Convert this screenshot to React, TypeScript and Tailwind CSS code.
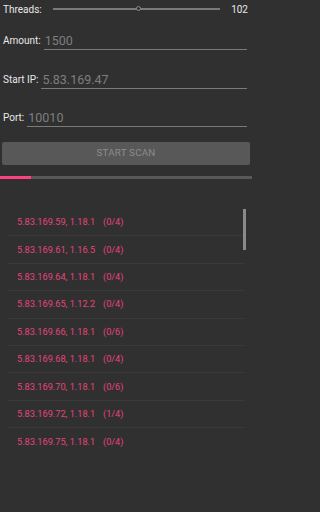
import React from "react";

const rows = [
  ["5.83.169.59, 1.18.1", "(0/4)"],
  ["5.83.169.61, 1.16.5", "(0/4)"],
  ["5.83.169.64, 1.18.1", "(0/4)"],
  ["5.83.169.65, 1.12.2", "(0/4)"],
  ["5.83.169.66, 1.18.1", "(0/6)"],
  ["5.83.169.68, 1.18.1", "(0/4)"],
  ["5.83.169.70, 1.18.1", "(0/6)"],
  ["5.83.169.72, 1.18.1", "(1/4)"],
  ["5.83.169.75, 1.18.1", "(0/4)"],
];

function Field({ label, value, mt }: { label: string; value: string; mt: string }) {
  return (
    <div className={`flex items-start pl-[3px] pr-[5px] ${mt}`}>
      <div className="h-[16px] leading-[16px] text-[10px] text-[#e8e8e8]">{label}</div>
      <div className="ml-[3px] flex-1 h-[17px] border-b border-[#7a7a7a] pl-[1px] text-[12.5px] leading-[16px] text-[#7e7e7e]">
        {value}
      </div>
    </div>
  );
}

export default function App() {
  return (
    <div className="min-h-screen w-full bg-[#303030]">
      <div className="w-[252px] h-[512px] bg-[#303030] overflow-hidden font-['Roboto',sans-serif]">
        <div className="flex items-center h-[18px] pl-[3px] pr-[4px]">
          <div className="w-[50px] text-[10px] text-[#e8e8e8]">Threads:</div>
          <div className="relative w-[167px] h-[2px] bg-[#7a7a7a]">
            <div className="absolute left-[83px] top-[-2px] w-[5px] h-[5px] rounded-full border border-[#8a8a8a] bg-[#303030]" />
          </div>
          <div className="flex-1 text-right text-[10px] text-[#e8e8e8]">102</div>
        </div>

        <Field label="Amount:" value="1500" mt="mt-[15px]" />
        <Field label="Start IP:" value="5.83.169.47" mt="mt-[22px]" />
        <Field label="Port:" value="10010" mt="mt-[21px]" />

        <div className="mx-[2px] mt-[15px] h-[23px] rounded-[2px] bg-[#585858] flex items-center justify-center text-[9.8px] text-[#8c8c8c] tracking-[0.2px]">
          START SCAN
        </div>

        <div className="mt-[11px] h-[3px] bg-[#585858] flex">
          <div className="w-[31px] h-full bg-[#ff4081]" />
        </div>

        <div className="relative mt-[30px] ml-[8px] w-[237px]">
          {rows.map(([a, b], i) => (
            <div
              key={i}
              className={`flex items-center h-[27.4px] pl-[9px] text-[9.2px] text-[#e5457c] ${i < rows.length - 1 ? "border-b border-[#3a3a3a]" : ""}`}
            >
              <span className="w-[86px]">{a}</span>
              <span>{b}</span>
            </div>
          ))}
          <div className="absolute right-[-1px] top-[0px] w-[3px] h-[41px] bg-[#8a8a8a]" />
        </div>
      </div>
    </div>
  );
}
